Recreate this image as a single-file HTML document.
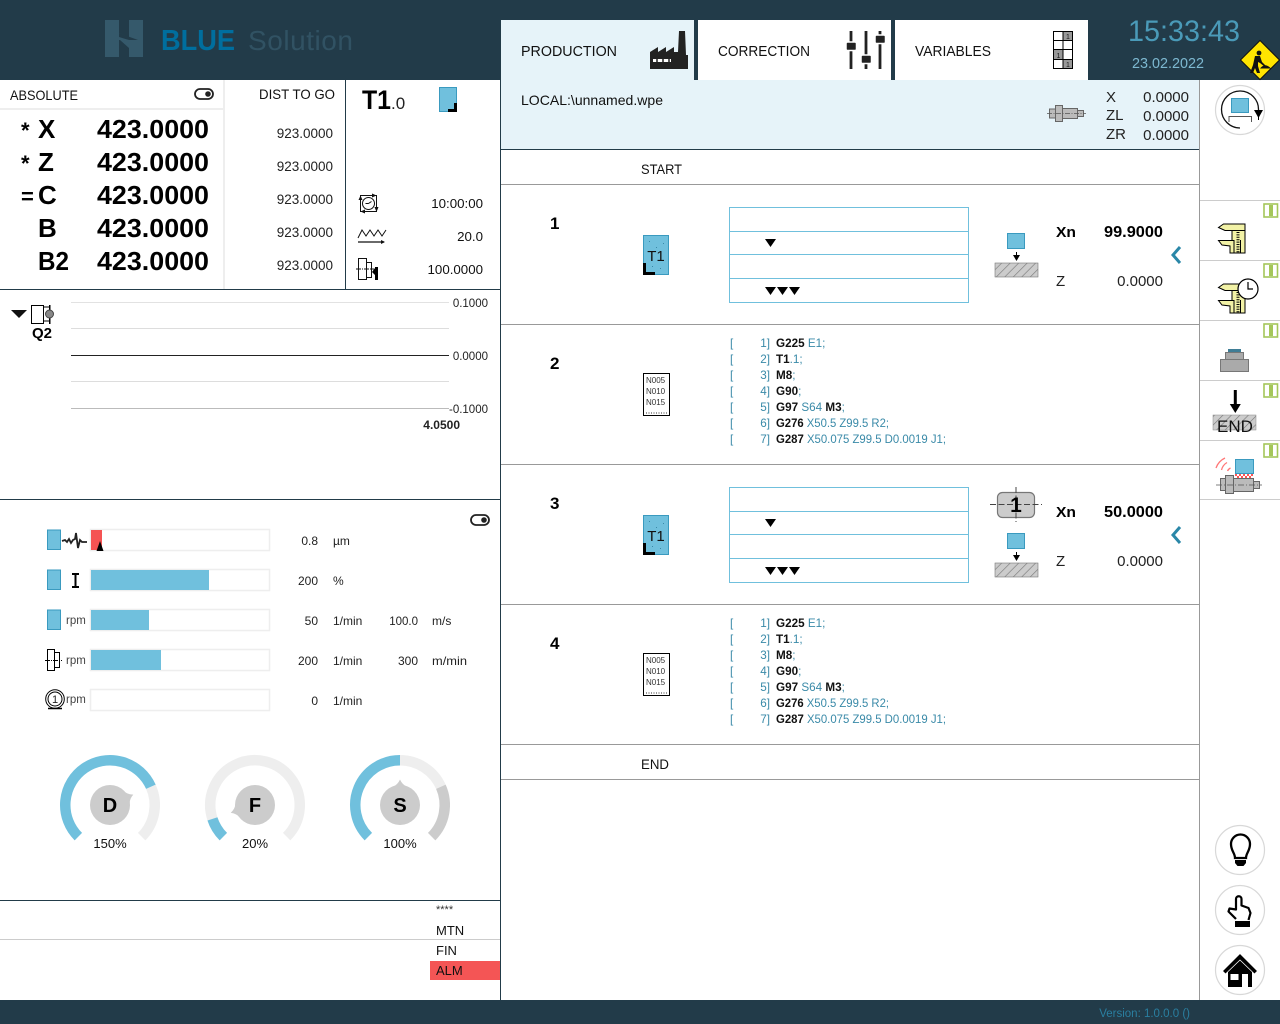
<!DOCTYPE html>
<html lang="en"><head><meta charset="utf-8"><title>BLUE Solution</title>
<style>
html,body{margin:0;padding:0;background:#fff;width:1280px;height:1024px;overflow:hidden}
svg{display:block;position:absolute;left:0;top:0}
text{font-family:"Liberation Sans",sans-serif;fill:#1a1a1a;font-size:13px}
.b{font-weight:700;fill:#000}
.r{text-anchor:end}
.m{text-anchor:middle}
.ax{font-size:26px;font-weight:700;fill:#000}
.v{font-size:13.5px;fill:#222}
.s{font-size:12px;fill:#222}
.t{font-size:14px;fill:#111}
.i{font-size:13.3px;fill:#111}
.h{font-size:11.5px;fill:#222}
.c{font-size:11.7px;fill:#3a8aa8}
.c tspan{font-weight:700;fill:#111}
.rpm{font-size:11.5px;fill:#444}
.d{font-size:15px;fill:#222}
.n{font-size:8px;fill:#333}
.p{font-size:13px;fill:#111}
</style></head><body>
<svg width="1280" height="1024" viewBox="0 0 1280 1024" xmlns="http://www.w3.org/2000/svg">
<defs>
<pattern id="h" width="6" height="6" patternUnits="userSpaceOnUse" patternTransform="rotate(45)">
<rect width="6" height="6" fill="#ccc"/><line x1="0" y1="0" x2="0" y2="6" stroke="#777" stroke-width="1.2"/></pattern>
<g id="tool">
<rect x="643.5" y="235.5" width="25" height="39" fill="#70c0dd" stroke="#3a9abf"/>
<path d="M649 241h1v1h-1zM656 247h1v1h-1zM663 243h1v1h-1zM660 268h1v1h-1zM652 266h1v1h-1z" fill="#3a8aa8"/>
<path d="M643 263h3v9h9v3h-12z" fill="#000"/>
</g>
<g id="tbl" fill="none" stroke="#70c0dd">
<rect x="729.5" y="207.5" width="239" height="95"/>
<path d="M730 231.5h238M730 254.500h238M730 278.500h238"/>
<g fill="#000" stroke="none">
<path d="M765 239h11l-5.500 8zM765 287h11l-5.500 8zM777 287h11l-5.500 8zM789 287h11l-5.500 8z"/>
</g>
</g>
<g id="work">
<rect x="1007.5" y="233.5" width="17" height="15" fill="#70c0dd" stroke="#3a9abf"/>
<path d="M1016.5 252v5" stroke="#000"/><path d="M1013 255h7l-3.500 6z" fill="#000"/>
<rect x="995" y="263" width="43" height="14" fill="url(#h)" stroke="#777" stroke-width=".6"/>
</g>
<g id="nc">
<rect x="643.5" y="373.5" width="26" height="42" fill="#fff" stroke="#000"/>
<text class="n" x="646" y="383">N005</text><text class="n" x="646" y="394">N010</text><text class="n" x="646" y="405">N015</text>
<path d="M646 413h21" stroke="#333" stroke-dasharray="1 1.500"/>
</g>
<g id="gi">
<rect x="1264" y="204" width="13.5" height="13" fill="#fff" stroke="#a4c65a" stroke-width="1.6"/>
<rect x="1269" y="205" width="4" height="11" fill="#a4c65a"/>
</g>
<g id="cal" stroke="#000" stroke-width="1" fill="#f2f2a6">
<path d="M1232 230v23h13v-23z"/>
<path d="M1218.5 227.500l5-3.500h21.500v6.500h-20z"/>
<path d="M1218.5 240.500h15.500v12.500h-4v-7l-8-1z"/>
<path d="M1238 232v21" stroke-width="3" stroke-dasharray="1 1.400" fill="none"/>
<path d="M1240.5 240v13" fill="none"/>
</g>
<path id="ptr" d="M-7 -18.500Q-2.500 -20 0 -25.500Q2.500 -20 7 -18.500Z" fill="#ccc"/>
<g id="tog"><rect x="195" y="89" width="18" height="10" rx="5" fill="#fff" stroke="#222" stroke-width="1.8"/><circle cx="208" cy="94" r="2.8" fill="#222"/></g>
</defs>

<!-- chrome -->
<rect width="1280" height="80" fill="#223b49"/>
<rect y="1000" width="1280" height="24" fill="#223b49"/>
<text x="1190" y="1017" class="r" style="font-size:11.5px;fill:#2a7fa0">Version: 1.0.0.0 ()</text>

<!-- logo -->
<path d="M105 20h14v13l10 4v-17h14v37h-14v-9l-9-8h-1v17h-14z" fill="#35596b"/>
<path d="M119 33l19 7h-9l-10-3z" fill="#223b49"/>
<text x="161" y="50" textLength="74" lengthAdjust="spacingAndGlyphs" style="font-size:29px;font-weight:700;fill:#006e9e">BLUE</text>
<text x="248" y="50" textLength="105" lengthAdjust="spacing" style="font-size:28px;fill:#315263">Solution</text>

<!-- tabs -->
<rect x="501" y="20" width="193" height="60" fill="#e6f3f9"/>
<rect x="698" y="20" width="193" height="60" fill="#fff"/>
<rect x="895" y="20" width="193" height="60" fill="#fff"/>
<text x="521" y="56" textLength="96" lengthAdjust="spacingAndGlyphs" style="font-size:15px;fill:#111">PRODUCTION</text>
<text x="718" y="56" textLength="92" lengthAdjust="spacingAndGlyphs" style="font-size:15px;fill:#111">CORRECTION</text>
<text x="915" y="56" textLength="76" lengthAdjust="spacingAndGlyphs" style="font-size:15px;fill:#111">VARIABLES</text>
<path d="M650 69V52l8-5v5l8-5v5l8-5v5h4l1-21h6l1 24h2v14z" fill="#222"/>
<path d="M653 59h18v3h-18z" fill="#fff"/><path d="M657 58.500v4M663 58.500v4M669 58.500v4" stroke="#222" stroke-width="1.5"/>
<g stroke="#222" stroke-width="2.8" fill="none">
<path d="M851 31v38M866 31v38M880 31v38"/></g>
<g fill="#222" stroke="#fff" stroke-width="1.5">
<rect x="846" y="42" width="10.5" height="8.500" rx="1.5"/><rect x="861" y="55" width="10.5" height="8.500" rx="1.5"/><rect x="875" y="35" width="10.5" height="8.500" rx="1.5"/></g>
<g fill="#fff" stroke="#000">
<path d="M1053.5 31.500h19v37h-19zM1063 31.500v37M1053.5 40.500h19M1053.5 49.500h19M1053.5 59.500h19"/>
<rect x="1063" y="31.5" width="9.5" height="9" fill="#999"/><rect x="1053.5" y="49.5" width="9.5" height="10" fill="#999"/><rect x="1063" y="59.5" width="9.5" height="9" fill="#999"/>
</g>
<text x="1066" y="39" style="font-size:7px">1</text><text x="1056.5" y="58" style="font-size:7px">1</text><text x="1066" y="67" style="font-size:7px">1</text>

<!-- clock -->
<text x="1128" y="41" textLength="112" lengthAdjust="spacingAndGlyphs" style="font-size:30px;fill:#4a9ab8">15:33:43</text>
<text x="1132" y="68" textLength="72" lengthAdjust="spacingAndGlyphs" style="font-size:15px;fill:#7db8d0">23.02.2022</text>
<path d="M1260 40.500l19.500 19.500-19.500 19.500-19.500-19.500z" fill="#ffe400" stroke="#111"/>
<circle cx="1259" cy="53" r="2.4" fill="#111"/>
<path d="M1255 56L1260 56L1262 62L1266 66L1265 67L1260 63L1258 62L1258 66L1260 73H1257L1255 68L1253 73H1250L1253 65Z" fill="#111"/>
<path d="M1260 68.500Q1265 62 1271 68.500Z" fill="#111"/>

<!-- left frame -->
<rect x="223" y="80" width="2" height="209" fill="#eee"/>
<rect x="0" y="108" width="223" height="2" fill="#eee"/>
<rect x="345" y="80" width="1" height="209" fill="#223b49"/>
<rect x="0" y="289" width="500" height="1" fill="#223b49"/>
<rect x="0" y="499" width="500" height="1" fill="#223b49"/>
<rect x="0" y="900" width="500" height="1" fill="#223b49"/>
<rect x="0" y="939" width="500" height="1" fill="#ccc"/>
<rect x="500" y="80" width="1" height="920" fill="#223b49"/>

<!-- position -->
<text x="10" y="100" textLength="68" lengthAdjust="spacingAndGlyphs" class="t">ABSOLUTE</text>
<use href="#tog"/>
<text x="259" y="99" textLength="76" lengthAdjust="spacingAndGlyphs" class="t">DIST TO GO</text>
<text class="ax" x="21" y="138" style="font-size:22px">*</text><text class="ax" x="38" y="138">X</text>
<text class="ax" x="21" y="171" style="font-size:22px">*</text><text class="ax" x="38" y="171">Z</text>
<text class="ax" x="21" y="204" style="font-size:22px">=</text><text class="ax" x="38" y="204">C</text>
<text class="ax" x="38" y="237">B</text>
<text class="ax" x="38" y="270" textLength="31" lengthAdjust="spacingAndGlyphs">B2</text>
<text class="ax" x="97" y="138" textLength="112" lengthAdjust="spacingAndGlyphs">423.0000</text>
<text class="ax" x="97" y="171" textLength="112" lengthAdjust="spacingAndGlyphs">423.0000</text>
<text class="ax" x="97" y="204" textLength="112" lengthAdjust="spacingAndGlyphs">423.0000</text>
<text class="ax" x="97" y="237" textLength="112" lengthAdjust="spacingAndGlyphs">423.0000</text>
<text class="ax" x="97" y="270" textLength="112" lengthAdjust="spacingAndGlyphs">423.0000</text>
<text class="v r" x="333" y="138">923.0000</text>
<text class="v r" x="333" y="171">923.0000</text>
<text class="v r" x="333" y="204">923.0000</text>
<text class="v r" x="333" y="237">923.0000</text>
<text class="v r" x="333" y="270">923.0000</text>

<!-- tool info -->
<text x="362" y="109" textLength="29" lengthAdjust="spacingAndGlyphs" style="font-size:27px;font-weight:700;fill:#000">T1</text>
<text x="391" y="109" style="font-size:17px;fill:#222">.0</text>
<rect x="439.5" y="87.5" width="17" height="24" fill="#70c0dd" stroke="#3a9abf"/>
<path d="M454 103h3v9h-9v-3h6z" fill="#000"/>
<text class="i r" x="483" y="208">10:00:00</text>
<text class="i r" x="483" y="241">20.0</text>
<text class="i r" x="483" y="274">100.0000</text>
<g fill="none" stroke="#111">
<rect x="360.5" y="195.5" width="16" height="16"/>
<circle cx="368.5" cy="203.5" r="6"/><path d="M368.500 203.500l3-2M368.500 203.500h-3"/>
<path d="M358 238l4-8 4 6 4-6 4 6 4-6 4 6 4-6"/>
<path d="M358 242h26" stroke-width="1.2"/>
<rect x="358.5" y="258.5" width="8" height="21"/><rect x="366.5" y="262.5" width="5" height="15"/>
<path d="M356 269h18" stroke-dasharray="5 1 1 1"/>
</g>
<path d="M372 193.500v4l4.500-2zM374.500 207h4l-2 5zM365 209.500v4l-4.500-2zM358.500 200h4l-2-4.500zM381 240l4 2-4 2z" fill="#111"/>
<path d="M372 272l3-4v-1h3v13h-3v-5z" fill="#000"/>

<!-- chart -->
<path d="M11 310h16l-8 8z" fill="#111"/>
<rect x="31.5" y="305.5" width="12" height="18" fill="#fff" stroke="#000"/>
<path d="M44 307h6M44 321h6" stroke="#000"/><rect x="49" y="305" width="1.5" height="19" fill="#000"/>
<circle cx="49.5" cy="314" r="4" fill="#888" stroke="#444"/>
<text x="32" y="338" style="font-size:15px;font-weight:700;fill:#000">Q2</text>
<rect x="71" y="302" width="378" height="1" fill="#e2e2e2"/>
<rect x="71" y="328" width="378" height="1" fill="#ddd"/>
<rect x="71" y="355" width="378" height="1" fill="#222"/>
<rect x="71" y="381" width="378" height="1" fill="#ddd"/>
<rect x="71" y="408" width="378" height="1" fill="#bbb"/>
<text class="h r" x="488" y="307">0.1000</text>
<text class="h r" x="488" y="360">0.0000</text>
<text class="h r" x="488" y="413">-0.1000</text>
<text class="r" x="460" y="429" style="font-size:12px;font-weight:700;fill:#222">4.0500</text>

<!-- bars -->
<use href="#tog" x="276" y="426"/>
<g fill="#fff" stroke="#eee" stroke-width="1.5">
<rect x="90.5" y="529.5" width="179" height="21"/><rect x="90.5" y="569.5" width="179" height="21"/><rect x="90.5" y="609.5" width="179" height="21"/><rect x="90.5" y="649.5" width="179" height="21"/><rect x="90.5" y="689.5" width="179" height="21"/>
</g>
<rect x="91" y="530" width="11" height="20" fill="#f55353"/>
<path d="M100 541l3.500 10h-7z" fill="#000"/>
<rect x="91" y="570" width="118" height="20" fill="#70c0dd"/>
<rect x="91" y="610" width="58" height="20" fill="#70c0dd"/>
<rect x="91" y="650" width="70" height="20" fill="#70c0dd"/>
<g fill="#70c0dd" stroke="#3a9abf">
<rect x="47.5" y="530" width="13" height="19.5"/><rect x="47.5" y="570" width="13" height="19.5"/><rect x="47.5" y="610" width="13" height="19.5"/>
</g>
<path d="M62 541l3-1 2 2 2-3 2 4 2-3 2-1 1-6 2 15 2-8 2 2h5" fill="none" stroke="#222" stroke-width="1.8"/>
<path d="M72 573h7v2h-2.500v11h2.500v2h-7v-2h2.500v-11h-2.500z" fill="#000"/>
<text class="rpm" x="66" y="624">rpm</text><text class="rpm" x="66" y="664">rpm</text><text class="rpm" x="66" y="703">rpm</text>
<g fill="#fff" stroke="#000">
<rect x="47.5" y="649.5" width="7" height="21"/><rect x="54.5" y="652.5" width="5" height="15"/>
<path d="M45 660.500h17" stroke-dasharray="5 1 1 1"/>
<circle cx="55" cy="699" r="9.3"/><circle cx="55" cy="699" r="7"/><path d="M48 708.500h14" stroke-width="1.5"/>
</g>
<text class="m" x="55" y="703" style="font-size:11px;fill:#222">1</text>
<text class="s r" x="318" y="545">0.8</text><text class="s" x="333" y="545">µm</text>
<text class="s r" x="318" y="585">200</text><text class="s" x="333" y="585">%</text>
<text class="s r" x="318" y="625">50</text><text class="s" x="333" y="625">1/min</text>
<text class="h r" x="418" y="625">100.0</text><text class="s" x="432" y="625">m/s</text>
<text class="s r" x="318" y="665">200</text><text class="s" x="333" y="665">1/min</text>
<text class="s r" x="418" y="665">300</text><text class="s" x="432" y="665" textLength="35" lengthAdjust="spacingAndGlyphs">m/min</text>
<text class="s r" x="318" y="705">0</text><text class="s" x="333" y="705">1/min</text>

<!-- gauges -->
<g fill="none" stroke-width="10.5">
<g transform="translate(110 805)">
<path d="M40.880 -18.200A44.750 44.750 0 0 1 31.640 31.640" stroke="#eee"/>
<path d="M-31.640 31.640A44.750 44.750 0 1 1 40.880 -18.200" stroke="#70c0dd"/>
</g>
<g transform="translate(255 805)">
<path d="M-42.560 13.830A44.750 44.750 0 1 1 31.640 31.640" stroke="#eee"/>
<path d="M-31.640 31.640A44.750 44.750 0 0 1 -42.560 13.830" stroke="#70c0dd"/>
</g>
<g transform="translate(400 805)">
<path d="M0 -44.750A44.750 44.750 0 0 1 40.880 -18.200" stroke="#eee"/>
<path d="M40.880 -18.200A44.750 44.750 0 0 1 31.640 31.640" stroke="#ccc"/>
<path d="M-31.640 31.640A44.750 44.750 0 0 1 0 -44.750" stroke="#70c0dd"/>
</g>
</g>
<circle cx="110" cy="805" r="20" fill="#ccc"/><circle cx="255" cy="805" r="20" fill="#ccc"/><circle cx="400" cy="805" r="20" fill="#ccc"/>
<use href="#ptr" transform="translate(110 805) rotate(66)"/>
<use href="#ptr" transform="translate(255 805) rotate(252)"/>
<use href="#ptr" transform="translate(400 805)"/>
<text class="m b" x="110" y="812" style="font-size:20px">D</text>
<text class="m b" x="255" y="812" style="font-size:20px">F</text>
<text class="m b" x="400" y="812" style="font-size:20px">S</text>
<text class="m p" x="110" y="848">150%</text>
<text class="m p" x="255" y="848">20%</text>
<text class="m p" x="400" y="848">100%</text>

<!-- status -->
<rect x="430" y="961" width="70" height="19" fill="#f45555"/>
<text x="436" y="913" style="font-size:11px;fill:#333">****</text>
<text x="436" y="935" style="font-size:13px;fill:#111">MTN</text>
<text x="436" y="955" style="font-size:13px;fill:#111">FIN</text>
<text x="436" y="975" style="font-size:13px;fill:#111">ALM</text>

<!-- main panel -->
<rect x="501" y="80" width="698" height="69" fill="#e6f3f9"/>
<rect x="501" y="149" width="698" height="1" fill="#223b49"/>
<rect x="1199" y="80" width="1" height="920" fill="#999"/>
<g fill="#999"><rect x="501" y="184" width="698" height="1"/><rect x="501" y="324" width="698" height="1"/><rect x="501" y="464" width="698" height="1"/><rect x="501" y="604" width="698" height="1"/><rect x="501" y="744" width="698" height="1"/><rect x="501" y="779" width="698" height="1"/></g>
<text x="521" y="105" textLength="142" lengthAdjust="spacingAndGlyphs" style="font-size:14px;fill:#111">LOCAL:\unnamed.wpe</text>
<g fill="#bbb" stroke="#666">
<rect x="1055.5" y="105.5" width="7" height="16"/><rect x="1049.5" y="109" width="6" height="9"/><rect x="1062.5" y="108.5" width="15" height="10"/><rect x="1077.5" y="110.5" width="6" height="6"/>
</g>
<path d="M1047 113.500h39" stroke="#555" stroke-dasharray="5 1.500 1 1.500" stroke-width=".8"/>
<text class="d" x="1106" y="102">X</text><text class="d" x="1106" y="120">ZL</text><text class="d" x="1106" y="139">ZR</text>
<text class="d r" x="1189" y="102">0.0000</text><text class="d r" x="1189" y="121">0.0000</text><text class="d r" x="1189" y="140">0.0000</text>
<text x="641" y="174" class="t" textLength="41" lengthAdjust="spacingAndGlyphs">START</text><text x="641" y="769" class="t" textLength="28" lengthAdjust="spacingAndGlyphs">END</text>

<text class="b" x="550" y="229" style="font-size:17px">1</text>
<text class="b" x="550" y="369" style="font-size:17px">2</text>
<text class="b" x="550" y="509" style="font-size:17px">3</text>
<text class="b" x="550" y="649" style="font-size:17px">4</text>

<!-- step 1 -->
<use href="#tool"/><text class="m" x="656" y="261" style="font-size:15px;fill:#111">T1</text>
<use href="#tbl"/><use href="#work"/>
<text x="1056" y="237" textLength="20" lengthAdjust="spacingAndGlyphs" style="font-size:15px;font-weight:700;fill:#000">Xn</text>
<text x="1104" y="237" textLength="59" lengthAdjust="spacingAndGlyphs" style="font-size:15.5px;font-weight:700;fill:#000">99.9000</text>
<text class="d" x="1056" y="286">Z</text><text class="d r" x="1163" y="286">0.0000</text>
<path d="M1180 247l-7 8 7 8" fill="none" stroke="#2a87a8" stroke-width="3"/>

<!-- step 3 -->
<use href="#tool" y="280"/><text class="m" x="656" y="541" style="font-size:15px;fill:#111">T1</text>
<use href="#tbl" y="280"/><use href="#work" y="300"/>
<rect x="997.5" y="492.5" width="37" height="25" rx="5" fill="#ccc" stroke="#777" stroke-width="1.2"/>
<path d="M990 504.500h52M1016 487v35" stroke="#444" stroke-dasharray="6 2.500" stroke-width="1"/>
<text class="m b" x="1016" y="512" style="font-size:21px">1</text>
<text x="1056" y="517" textLength="20" lengthAdjust="spacingAndGlyphs" style="font-size:15px;font-weight:700;fill:#000">Xn</text>
<text x="1104" y="517" textLength="59" lengthAdjust="spacingAndGlyphs" style="font-size:15.5px;font-weight:700;fill:#000">50.0000</text>
<text class="d" x="1056" y="566">Z</text><text class="d r" x="1163" y="566">0.0000</text>
<path d="M1180 527l-7 8 7 8" fill="none" stroke="#2a87a8" stroke-width="3"/>

<!-- step 2 -->
<use href="#nc"/>
<text class="c" x="730" y="347">[</text><text class="c r" x="770" y="347">1]</text><text class="c" x="776" y="347"><tspan>G225</tspan> E1;</text>
<text class="c" x="730" y="363">[</text><text class="c r" x="770" y="363">2]</text><text class="c" x="776" y="363"><tspan>T1</tspan>.1;</text>
<text class="c" x="730" y="379">[</text><text class="c r" x="770" y="379">3]</text><text class="c" x="776" y="379"><tspan>M8</tspan>;</text>
<text class="c" x="730" y="395">[</text><text class="c r" x="770" y="395">4]</text><text class="c" x="776" y="395"><tspan>G90</tspan>;</text>
<text class="c" x="730" y="411">[</text><text class="c r" x="770" y="411">5]</text><text class="c" x="776" y="411"><tspan>G97</tspan> S64 <tspan>M3</tspan>;</text>
<text class="c" x="730" y="427">[</text><text class="c r" x="770" y="427">6]</text><text class="c" x="776" y="427" textLength="113" lengthAdjust="spacingAndGlyphs"><tspan>G276</tspan> X50.5 Z99.5 R2;</text>
<text class="c" x="730" y="443">[</text><text class="c r" x="770" y="443">7]</text><text class="c" x="776" y="443" textLength="170" lengthAdjust="spacingAndGlyphs"><tspan>G287</tspan> X50.075 Z99.5 D0.0019 J1;</text>

<!-- step 4 -->
<use href="#nc" y="280"/>
<text class="c" x="730" y="627">[</text><text class="c r" x="770" y="627">1]</text><text class="c" x="776" y="627"><tspan>G225</tspan> E1;</text>
<text class="c" x="730" y="643">[</text><text class="c r" x="770" y="643">2]</text><text class="c" x="776" y="643"><tspan>T1</tspan>.1;</text>
<text class="c" x="730" y="659">[</text><text class="c r" x="770" y="659">3]</text><text class="c" x="776" y="659"><tspan>M8</tspan>;</text>
<text class="c" x="730" y="675">[</text><text class="c r" x="770" y="675">4]</text><text class="c" x="776" y="675"><tspan>G90</tspan>;</text>
<text class="c" x="730" y="691">[</text><text class="c r" x="770" y="691">5]</text><text class="c" x="776" y="691"><tspan>G97</tspan> S64 <tspan>M3</tspan>;</text>
<text class="c" x="730" y="707">[</text><text class="c r" x="770" y="707">6]</text><text class="c" x="776" y="707" textLength="113" lengthAdjust="spacingAndGlyphs"><tspan>G276</tspan> X50.5 Z99.5 R2;</text>
<text class="c" x="730" y="723">[</text><text class="c r" x="770" y="723">7]</text><text class="c" x="776" y="723" textLength="170" lengthAdjust="spacingAndGlyphs"><tspan>G287</tspan> X50.075 Z99.5 D0.0019 J1;</text>

<!-- right rail -->
<g fill="#ccc"><rect x="1200" y="200" width="80" height="1"/><rect x="1200" y="260" width="80" height="1"/><rect x="1200" y="320" width="80" height="1"/><rect x="1200" y="380" width="80" height="1"/><rect x="1200" y="440" width="80" height="1"/><rect x="1200" y="499" width="80" height="1"/></g>
<use href="#gi"/><use href="#gi" y="60"/><use href="#gi" y="120"/><use href="#gi" y="180"/><use href="#gi" y="240"/>
<g fill="#fff" stroke="#d8d8d8" stroke-width="1.2">
<circle cx="1240" cy="110" r="24.5"/><circle cx="1240" cy="850" r="24.5"/><circle cx="1240" cy="910" r="24.5"/><circle cx="1240" cy="970" r="24.5"/>
</g>
<rect x="1231.5" y="98.5" width="17" height="14" fill="#70c0dd" stroke="#3a9abf"/>
<path d="M1229 122v-5.500h22.500v5.500" fill="none" stroke="#555"/>
<path d="M1240 128A18.500 18.500 0 1 1 1258.500 110" fill="none" stroke="#111" stroke-width="1.3"/>
<path d="M1254 110h9l-4.500 8z" fill="#000"/><path d="M1258.500 116v4" stroke="#000"/>

<use href="#cal"/><use href="#cal" y="60"/>
<circle cx="1248" cy="289" r="10" fill="#fff" stroke="#000" stroke-width="1.2"/>
<path d="M1248 282v7h5" fill="none" stroke="#000" stroke-width="1.2"/>

<rect x="1228" y="349" width="13" height="4" fill="#3f7d96"/>
<rect x="1225.5" y="352.5" width="18" height="7" fill="#aaa" stroke="#777"/>
<rect x="1220.5" y="359.5" width="28" height="12" fill="#aaa" stroke="#777"/>

<rect x="1213" y="415" width="43" height="15" fill="url(#h)" stroke="#888" stroke-width=".5"/>
<path d="M1233.8 390h3v14h4l-5.500 9-5.500-9h4z" fill="#000"/>
<text class="m" x="1235" y="432" style="font-size:17px;fill:#111">END</text>

<path d="M1216 468A17.500 17.500 0 0 1 1225 458M1221.500 470A12 12 0 0 1 1227 462.500M1227.500 471A6 6 0 0 1 1230.500 468" fill="none" stroke="#f77" stroke-width="1.3"/>
<rect x="1235.5" y="459.5" width="18" height="14" fill="#70c0dd" stroke="#3a9abf"/>
<path d="M1235 475h18M1237 477h16" stroke="#f55" stroke-width="2" stroke-dasharray="2 2"/>
<g fill="#bbb" stroke="#666">
<rect x="1220.5" y="478.5" width="5" height="12"/><rect x="1225.5" y="475.5" width="8" height="18"/><rect x="1233.5" y="478.5" width="20" height="13"/><rect x="1253.5" y="481.5" width="6" height="7"/>
</g>
<path d="M1216 485h46" stroke="#555" stroke-dasharray="6 2 1 2" stroke-width=".8"/>

<path d="M1235 858C1235 853 1231 851 1231 844A9.500 9.500 0 0 1 1250 844C1250 851 1246 853 1246 858Z" fill="none" stroke="#000" stroke-width="2.3"/>
<path d="M1235 860h11v3l-2.500 3h-6l-2.500-3z" fill="#000"/>

<path d="M1236 919L1228.500 911.500L1229.500 908.500L1236 909.500V899A2.700 2.700 0 0 1 1241.500 899V905.500L1248.500 908L1250.500 913L1248.500 920" fill="none" stroke="#000" stroke-width="2.2" stroke-linejoin="round"/>
<rect x="1235" y="921" width="15" height="6" fill="#000"/>

<path d="M1228 968l12-8 12 8v19h-24z" fill="#000"/>
<path d="M1240 953.500L1222.500 971L1225.500 974L1240 960L1254.500 974L1257.500 971Z" fill="#000" stroke="#fff" stroke-width=".8"/>
<rect x="1230.5" y="974" width="8" height="6" fill="#fff"/><rect x="1242" y="974" width="6" height="13" fill="#fff"/>
</svg>
</body></html>
